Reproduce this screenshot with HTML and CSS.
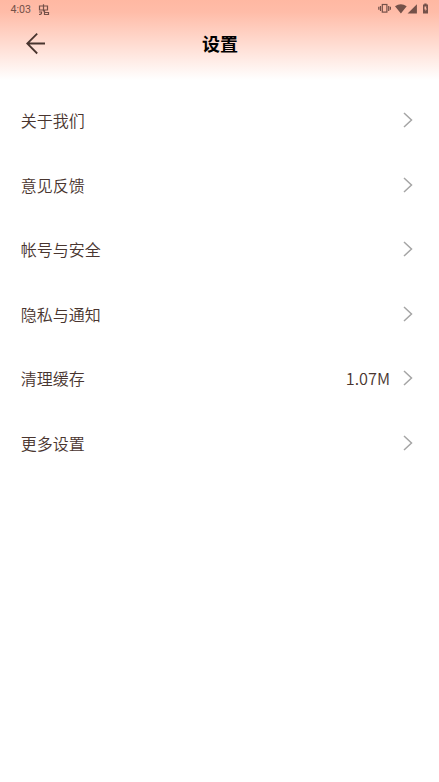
FILE: index.html
```html
<!DOCTYPE html>
<html lang="zh-CN">
<head>
<meta charset="utf-8">
<title>设置</title>
<link rel="stylesheet" href="styles.css">
</head>
<body>
<header class="top">
  <div class="status">
    <span class="time">4:03</span>
    <svg class="notice" width="12" height="13" viewBox="0 0 12 13"><path d="M5.5 .3V7.5M1.5 2H9.5V6H1.5ZM3.5 7.5V9Q3.5 10.5 1 10.5M1 8H3.5M6.5 6V10.5H10.5V8.5H6.5"/></svg>
    <svg class="indicators" width="52" height="12" viewBox="0 0 52 12">
      <rect class="line" x="4.3" y="2.5" width="4.6" height="7.6"/>
      <path class="line" d="M.8 4.8v3M2.5 4v5M10.7 4v5M12.4 4.8v3"/>
      <path d="M17 4.2Q22.8 .5 28.7 4.2L22.9 11.4ZM29.6 11.4 38.9 2.2V11.4Z"/>
      <path fill-rule="evenodd" d="M45 2.5h1.3V1.4h2.3v1.1H50V11.5H45ZM48.4 4.4H46.5V7.4h1.1v2.2l1.3-3.2H47.9Z"/>
    </svg>
  </div>
  <div class="nav">
    <svg class="back" width="20" height="22" viewBox="0 0 20 22"><path d="M11.2 .7 1.2 10.5l10 10M1.2 10.5H19"/></svg>
    <h1>设置</h1>
  </div>
</header>
<main class="list">
  <div class="row"><span class="label">关于我们</span><svg class="chevron" viewBox="0 0 10 16"><path d="m1 1 7.5 7L1 15"/></svg></div>
  <div class="row"><span class="label">意见反馈</span><svg class="chevron" viewBox="0 0 10 16"><path d="m1 1 7.5 7L1 15"/></svg></div>
  <div class="row"><span class="label">帐号与安全</span><svg class="chevron" viewBox="0 0 10 16"><path d="m1 1 7.5 7L1 15"/></svg></div>
  <div class="row"><span class="label">隐私与通知</span><svg class="chevron" viewBox="0 0 10 16"><path d="m1 1 7.5 7L1 15"/></svg></div>
  <div class="row"><span class="label">清理缓存</span><span class="value">1.07M</span><svg class="chevron" viewBox="0 0 10 16"><path d="m1 1 7.5 7L1 15"/></svg></div>
  <div class="row"><span class="label">更多设置</span><svg class="chevron" viewBox="0 0 10 16"><path d="m1 1 7.5 7L1 15"/></svg></div>
</main>
</body>
</html>
```
FILE: styles.css
```css
* { box-sizing: border-box; }
body {
  margin: 0;
  min-height: 782px;
  background: #fff;
  color: #49352f;
  font-family: "Noto Sans CJK SC", sans-serif;
}
.top {
  height: 88px;
  background: linear-gradient(#ffb8a2 0, #ffbca8 12px, #fff 80px);
}
.status {
  display: flex;
  align-items: center;
  height: 18px;
  padding: 0 9px 0 10.5px;
  color: #745149;
}
.time {
  width: 27.5px;
  padding-top: 1px;
  font: 10.6px/18px Roboto, sans-serif;
}
.notice {
  margin-top: 2px;
  fill: none;
  stroke: currentColor;
  stroke-width: 1.2;
}
.indicators {
  margin-left: auto;
  margin-top: -2px;
  fill: currentColor;
}
.line { fill: none; stroke: currentColor; stroke-width: 1.2; }
.nav {
  display: grid;
  grid-template-columns: 60px 1fr 60px;
  align-items: center;
  height: 50px;
}
.back {
  margin-left: 26px;
  margin-top: 1px;
  fill: none;
  stroke: #49352f;
  stroke-width: 1.8;
}
h1 {
  margin: 0;
  padding: 0 0 1px 1px;
  color: #000;
  font-size: 18px;
  line-height: 26px;
  font-weight: 700;
  text-align: center;
}
.row {
  display: flex;
  align-items: center;
  height: 64.5px;
  padding: 0 26px 0 20.7px;
  font-size: 16px;
  line-height: 24px;
  font-weight: 350;
}
.label { flex: 1; }
.value { margin-right: 13px; font-size: 16.3px; }
.chevron {
  width: 10px;
  height: 16px;
  fill: none;
  stroke: #a5a5a5;
  stroke-width: 1.5;
}
```
